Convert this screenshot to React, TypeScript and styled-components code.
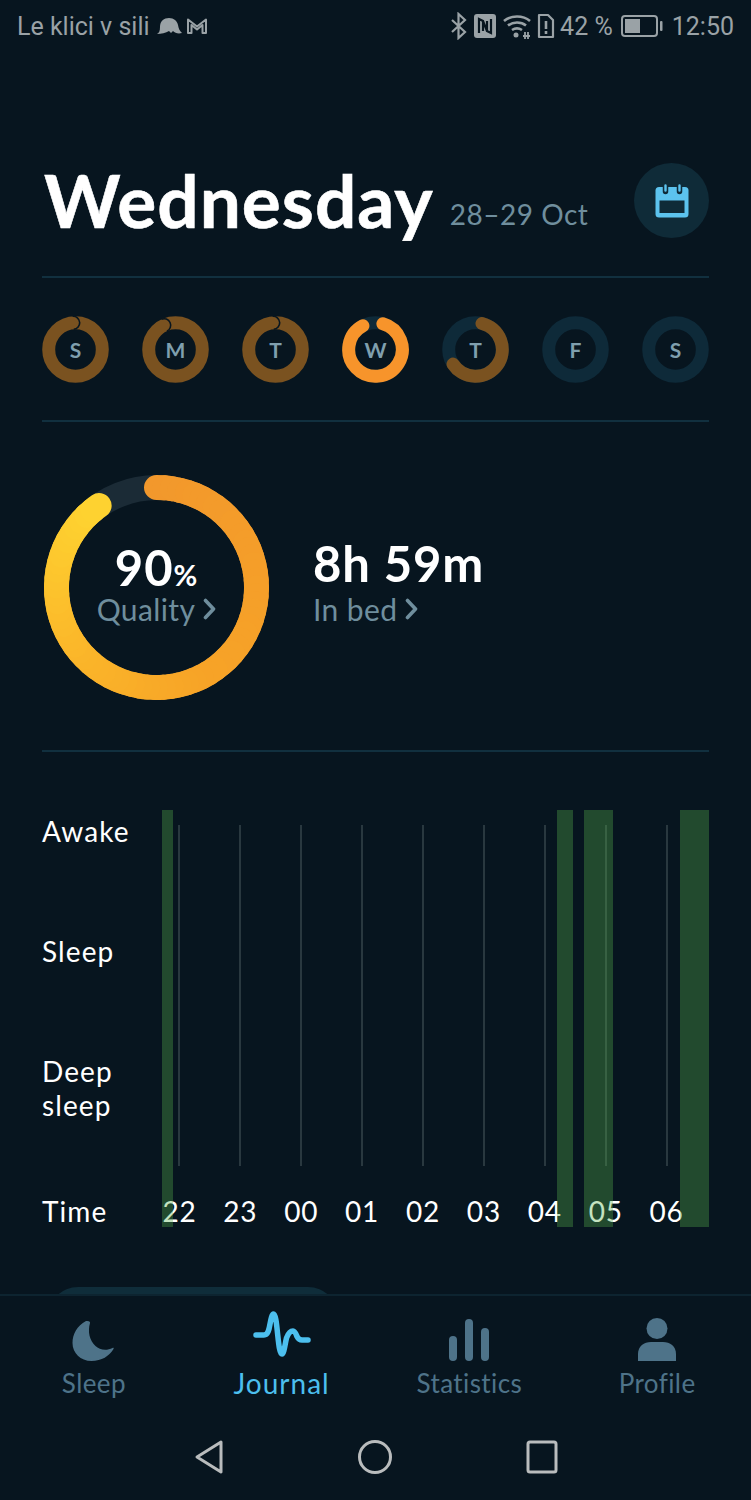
import React from "react";
import styled, { createGlobalStyle } from "styled-components";

const BG = "#07151f";
const MUTED = "#6f8e9d";
const NAV_MUTED = "#4e7389";
const ACCENT = "#4cbfee";
const APP_FONT = `Lato, "Open Sans", sans-serif`;

type Day = {
  letter: string;
  tone: "past" | "active" | "none";
  start?: number;
  end?: number;
  seam?: number; // where a finished ring's end cap overlaps its start
};

const DAYS: Day[] = [
  { letter: "S", tone: "past", seam: -5 },
  { letter: "M", tone: "past", seam: -25 },
  { letter: "T", tone: "past", seam: -5 },
  { letter: "W", tone: "active", start: 16, end: 332 },
  { letter: "T", tone: "past", start: 14, end: 237 },
  { letter: "F", tone: "none" },
  { letter: "S", tone: "none" },
];

const HOURS = ["22", "23", "00", "01", "02", "03", "04", "05", "06"];

// awake periods, x and width inside the plot
const AWAKE = [
  { left: 13, width: 11 },
  { left: 408, width: 15.5 },
  { left: 434.5, width: 29 },
  { left: 531, width: 29 },
];

const polar = (c: number, r: number, deg: number) => {
  const a = ((deg - 90) * Math.PI) / 180;
  return [c + r * Math.cos(a), c + r * Math.sin(a)];
};

const arc = (c: number, r: number, start: number, end: number) => {
  const [x1, y1] = polar(c, r, start);
  const [x2, y2] = polar(c, r, end);
  const large = end - start > 180 ? 1 : 0;
  return `M${x1} ${y1}A${r} ${r} 0 ${large} 1 ${x2} ${y2}`;
};

// dark hairline round the rounded end of a finished ring
const seamPath = (c: number, r: number, half: number, deg: number) => {
  const [x1, y1] = polar(c, r + half, deg);
  const [x2, y2] = polar(c, r - half, deg);
  return `M${x1} ${y1}A${half} ${half} 0 0 1 ${x2} ${y2}`;
};

// colour along the quality ring, from its start at the top round to the yellow end
const QUALITY_STOPS: [number, number[]][] = [
  [0, [242, 152, 44]],
  [0.5, [247, 164, 39]],
  [0.75, [251, 184, 42]],
  [1, [254, 210, 48]],
];

const qualityColour = (t: number) => {
  const i = QUALITY_STOPS.findIndex(([at]) => at >= t);
  if (i <= 0) return `rgb(${QUALITY_STOPS[0][1].join(",")})`;
  const [a, from] = QUALITY_STOPS[i - 1];
  const [b, to] = QUALITY_STOPS[i];
  const k = (t - a) / (b - a);
  return `rgb(${from.map((v, n) => Math.round(v + (to[n] - v) * k)).join(",")})`;
};

const QUALITY_SEGMENTS = Array.from({ length: 72 }, (_, i) => i);

const GlobalStyle = createGlobalStyle`
  html, body {
    margin: 0;
    background: ${BG};
  }
  * {
    box-sizing: border-box;
  }
`;

const Screen = styled.div`
  width: 751px;
  height: 1500px;
  display: flex;
  flex-direction: column;
  background: ${BG};
  font-family: ${APP_FONT};
  overflow: hidden;
`;

const StatusBar = styled.div`
  height: 52px;
  flex: none;
  display: flex;
  align-items: center;
  justify-content: space-between;
  padding: 0 17px;
  color: #9aa2a6;
  font-family: Roboto, sans-serif;
  font-size: 25px;
`;

const StatusGroup = styled.div`
  display: flex;
  align-items: center;
  gap: ${(p: { $gap?: number }) => p.$gap ?? 5}px;
`;

const Main = styled.main`
  height: 1244px;
  flex: none;
  overflow: hidden;
  padding: 112px 42px 0;
  border-bottom: 2px solid #0d2430;
`;

const Header = styled.header`
  height: 114px;
  display: flex;
  align-items: flex-start;
  border-bottom: 2px solid #11303f;
`;

const Title = styled.h1`
  margin: -1px 0 0 2px;
  color: #fff;
  font-size: 73px;
  line-height: 75px;
  font-weight: 700;
  letter-spacing: 1px;
  -webkit-text-stroke: 0.6px #fff;
`;

const DateRange = styled.span`
  margin: 33px 0 0 16px;
  color: ${MUTED};
  font-size: 28px;
  line-height: 34px;
  letter-spacing: 0.5px;
`;

const CalendarButton = styled.button`
  width: 75px;
  height: 75px;
  margin: -1px 0 0 auto;
  padding: 0;
  border: 0;
  border-radius: 50%;
  background: #0f2b38;
  display: flex;
  align-items: center;
  justify-content: center;
`;

const WeekRow = styled.div`
  height: 144px;
  display: flex;
  align-items: center;
  justify-content: space-between;
  border-bottom: 2px solid #11303f;
`;

const DayRing = styled.div`
  position: relative;
  width: 67px;
  height: 67px;
`;

const DayLetter = styled.span`
  position: absolute;
  inset: 0;
  display: flex;
  align-items: center;
  justify-content: center;
  color: #7f9fae;
  font-size: 21px;
  font-weight: 700;
`;

const Summary = styled.section`
  height: 330px;
  display: flex;
  align-items: flex-start;
  padding: 53px 0 0 2px;
  border-bottom: 2px solid #11303f;
`;

const QualityRing = styled.div`
  position: relative;
  width: 225px;
  height: 225px;
  flex: none;
`;

const QualityText = styled.div`
  position: absolute;
  inset: 0;
  display: flex;
  flex-direction: column;
  align-items: center;
  justify-content: center;
  padding-bottom: 7px;
`;

const BigValue = styled.div`
  color: #fff;
  font-size: 49px;
  line-height: 50px;
  font-weight: 700;
  letter-spacing: 0.9px;
`;

const Percent = styled.span`
  font-size: 29px;
`;

const LinkLabel = styled.div`
  display: flex;
  align-items: center;
  gap: 8px;
  color: ${MUTED};
  font-size: 30px;
  line-height: 36px;
  letter-spacing: 0.4px;
`;

const QualityLabel = styled(LinkLabel)`
  margin-top: -9px;
`;

const BedLabel = styled(LinkLabel)`
  margin-top: 3px;
`;

const InBed = styled.div`
  margin: 63px 0 0 44px;
`;

const Chart = styled.section`
  position: relative;
  height: 477px;
  display: flex;
  padding-top: 58px;
`;

const RowLabels = styled.div`
  width: 107px;
  flex: none;
  padding-top: 4px;
  display: grid;
  grid-template-rows: 120px 120px 140px auto;
`;

const RowLabel = styled.div`
  color: #fff;
  font-size: 28px;
  line-height: 34px;
  letter-spacing: 1.1px;
`;

const Hours = styled.div`
  display: flex;
`;

const Hour = styled.div`
  width: 60.9px;
  display: flex;
  flex-direction: column;
  align-items: center;
`;

const Tick = styled.div`
  width: 2px;
  height: 341px;
  margin-top: 15px;
  background: #29383f;
`;

const HourLabel = styled.div`
  margin-top: 28px;
  color: #fff;
  font-size: 28px;
  line-height: 34px;
  letter-spacing: 0.8px;
`;

const Plot = styled.div`
  position: absolute;
  left: 107px;
  top: 58px;
  width: 560px;
  height: 417px;
`;

const AwakeBar = styled.div`
  position: absolute;
  top: 0;
  bottom: 0;
  background: rgba(87, 175, 74, 0.35);
`;

const MorePill = styled.div`
  width: 290px;
  height: 60px;
  margin: 58px 0 0 6px;
  border-radius: 30px;
  background: #0f2d3a;
`;

const TabBar = styled.nav`
  height: 112px;
  flex: none;
  display: grid;
  grid-template-columns: repeat(4, 1fr);
`;

const Tab = styled.div<{ $active?: boolean }>`
  display: flex;
  flex-direction: column;
  align-items: center;
  justify-content: flex-start;
  padding-top: 18px;
  color: ${(p) => (p.$active ? ACCENT : NAV_MUTED)};
  font-size: ${(p) => (p.$active ? 28 : 26)}px;
  letter-spacing: ${(p) => (p.$active ? 1 : 0.4)}px;
`;

const TabIcon = styled.div`
  height: 52px;
  display: flex;
  align-items: center;
  justify-content: center;
`;

const TabLabel = styled.span`
  line-height: 34px;
`;

const SystemBar = styled.div`
  flex: 1;
  display: flex;
  align-items: center;
  justify-content: center;
  gap: 134px;
  padding-top: 6px;
`;

function DayProgress({ letter, tone, start, end, seam }: Day) {
  const colour = tone === "active" ? "#f7942b" : "#7a5220";
  return (
    <DayRing>
      <svg width="67" height="67" viewBox="0 0 67 67">
        <circle cx="33.5" cy="33.5" r="26.8" fill="none" stroke={seam === undefined ? "#0e2a39" : colour} strokeWidth="13" />
        {end !== undefined && start !== undefined && (
          <path d={arc(33.5, 26.8, start, end)} fill="none" stroke={colour} strokeWidth="13" strokeLinecap="round" />
        )}
        {seam !== undefined && <path d={seamPath(33.5, 26.8, 6.5, seam)} fill="none" stroke={BG} strokeWidth="1.6" />}
      </svg>
      <DayLetter>{letter}</DayLetter>
    </DayRing>
  );
}

function Chevron() {
  return (
    <svg width="13" height="22" viewBox="0 0 13 22">
      <path d="M2.5 2.5 10.5 11l-8 8.5" fill="none" stroke={MUTED} strokeWidth="3.6" strokeLinecap="round" strokeLinejoin="round" />
    </svg>
  );
}

function Status() {
  const c = "#9aa2a6";
  return (
    <StatusBar>
      <StatusGroup $gap={6}>
        <span>Le klici v sili</span>
        <svg width="26" height="20" viewBox="0 0 26 20">
          <path d="M1 18c2-1 3-3 3-7C4 5 8 2 13 2s8 3 9 7c.5 3 1.500 6 4 8-4 1-7 0-9-2l-2 2-2-2c-3 2-8 3-12 3z" fill={c} />
        </svg>
        <svg width="24" height="20" viewBox="0 0 24 20" style={{ marginLeft: -3 }}>
          <path d="M3 17V3.500l9 7 9-7V17h-3.500V9L12 13.500 6.500 9V17z" fill="none" stroke={c} strokeWidth="2" strokeLinejoin="round" />
        </svg>
      </StatusGroup>
      <StatusGroup>
        <svg width="18" height="28" viewBox="0 0 18 28">
          <path d="M2 8l13 12-6.500 6V2L15 8 2 20" fill="none" stroke={c} strokeWidth="2.200" />
        </svg>
        <svg width="24" height="28" viewBox="0 0 24 28">
          <rect x="1" y="2" width="22" height="24" rx="3" fill={c} />
          <path d="M6 21V7l4 2v10M18 7v14l-4-2V9M10 9l4 10" fill="none" stroke={BG} strokeWidth="2.200" />
        </svg>
        <svg width="30" height="28" viewBox="0 0 30 28">
          <path d="M2 9c7-6 19-6 26 0M6 13.500c5-4 13-4 18 0M10 18c3-2 7-2 10 0" fill="none" stroke={c} strokeWidth="2.600" />
          <circle cx="14" cy="23" r="2.500" fill={c} />
          <path d="M21 24h7M23 20v7M26 20v7" stroke={c} strokeWidth="1.800" />
        </svg>
        <svg width="18" height="28" viewBox="0 0 18 28">
          <path d="M2 3h9l5 5v17H2z" fill="none" stroke={c} strokeWidth="2.200" strokeLinejoin="round" />
          <path d="M9 9v8M9 19v3" stroke={c} strokeWidth="2.600" />
        </svg>
        <span>42 %</span>
        <svg width="42" height="24" viewBox="0 0 42 24" style={{ marginLeft: 3 }}>
          <rect x="1" y="2" width="35" height="20" rx="3" fill="none" stroke={c} strokeWidth="2" />
          <rect x="4" y="5" width="15" height="14" fill={c} />
          <rect x="39" y="7" width="2.500" height="10" rx="1" fill={c} />
        </svg>
        <span style={{ marginLeft: 4 }}>12:50</span>
      </StatusGroup>
    </StatusBar>
  );
}

export default function App() {
  return (
    <Screen>
      <GlobalStyle />
      <Status />
      <Main>
        <Header>
          <Title>Wednesday</Title>
          <DateRange>28–29 Oct</DateRange>
          <CalendarButton aria-label="Calendar">
            <svg width="34" height="34" viewBox="0 0 34 34">
              <rect x="0.500" y="3" width="33" height="30.500" rx="3.500" fill="#5cc3ee" />
              <rect x="4.500" y="16.500" width="25" height="12.500" fill="#0f2b38" />
              <path d="M10.500 1.500v6M24.500 1.500v6" stroke="#0f2b38" strokeWidth="5.500" strokeLinecap="round" />
              <path d="M10.500 1.500v5M24.500 1.500v5" stroke="#5cc3ee" strokeWidth="2.400" strokeLinecap="round" />
            </svg>
          </CalendarButton>
        </Header>

        <WeekRow>
          {DAYS.map((day, idx) => (
            <DayProgress key={idx} {...day} />
          ))}
        </WeekRow>

        <Summary>
          <QualityRing>
            <svg width="225" height="225" viewBox="0 0 225 225">
              <circle cx="112.500" cy="112.500" r="100" fill="none" stroke="#1b2b36" strokeWidth="25" />
              {QUALITY_SEGMENTS.map((i) => {
                const step = 325 / QUALITY_SEGMENTS.length;
                return (
                  <path
                    key={i}
                    d={arc(112.5, 100, i * step, (i + 1) * step)}
                    fill="none"
                    stroke={qualityColour(i / (QUALITY_SEGMENTS.length - 1))}
                    strokeWidth="25"
                    strokeLinecap="round"
                  />
                );
              })}
            </svg>
            <QualityText>
              <BigValue>
                90<Percent>%</Percent>
              </BigValue>
              <QualityLabel>
                Quality <Chevron />
              </QualityLabel>
            </QualityText>
          </QualityRing>
          <InBed>
            <BigValue>8h 59m</BigValue>
            <BedLabel>
              In bed <Chevron />
            </BedLabel>
          </InBed>
        </Summary>

        <Chart>
          <RowLabels>
            <RowLabel>Awake</RowLabel>
            <RowLabel>Sleep</RowLabel>
            <RowLabel>
              Deep
              <br />
              sleep
            </RowLabel>
            <RowLabel>Time</RowLabel>
          </RowLabels>
          <Hours>
            {HOURS.map((hour) => (
              <Hour key={hour}>
                <Tick />
                <HourLabel>{hour}</HourLabel>
              </Hour>
            ))}
          </Hours>
          <Plot>
            {AWAKE.map((bar) => (
              <AwakeBar key={bar.left} style={{ left: bar.left, width: bar.width }} />
            ))}
          </Plot>
        </Chart>

        <MorePill />
      </Main>

      <TabBar>
        <Tab>
          <TabIcon>
            <svg width="44" height="46" viewBox="0 0 44 46">
              <path d="M14 4C5 9 .5 17 .5 26c0 10 8 18 19 18 10 0 18-5 22-12 .5-1 0-1.500-1-1-6 3-13 2-17-2-6-6-8-14-5.500-23 .3-1-.5-2.500-4-2z" fill={NAV_MUTED} />
            </svg>
          </TabIcon>
          <TabLabel>Sleep</TabLabel>
        </Tab>
        <Tab $active>
          <TabIcon>
            <svg width="60" height="50" viewBox="0 0 60 50" style={{ marginTop: -8 }}>
              <path d="M4 24h8c4 0 5-5 6-11 1-5 2-10 3.500-10 2 0 3 9 4 19 1 9 2 21 4.500 21 2 0 3-10 4.500-16 1.500-4 3-7 6.500-7 2 0 3 3 4 5.500 1 2 2 3.500 5 3.500h6" fill="none" stroke={ACCENT} strokeWidth="5.500" strokeLinecap="round" strokeLinejoin="round" />
            </svg>
          </TabIcon>
          <TabLabel>Journal</TabLabel>
        </Tab>
        <Tab>
          <TabIcon>
            <svg width="42" height="46" viewBox="0 0 42 46">
              <rect x="1" y="19" width="8" height="25" rx="4" fill={NAV_MUTED} />
              <rect x="17" y="2" width="8" height="42" rx="4" fill={NAV_MUTED} />
              <rect x="33" y="11" width="8" height="33" rx="4" fill={NAV_MUTED} />
            </svg>
          </TabIcon>
          <TabLabel>Statistics</TabLabel>
        </Tab>
        <Tab>
          <TabIcon>
            <svg width="40" height="46" viewBox="0 0 40 46">
              <ellipse cx="20" cy="11.500" rx="10.500" ry="10.500" fill={NAV_MUTED} />
              <path d="M1 44V37c0-8 6-12 13-12h12c7 0 13 4 13 12v7z" fill={NAV_MUTED} />
            </svg>
          </TabIcon>
          <TabLabel>Profile</TabLabel>
        </Tab>
      </TabBar>

      <SystemBar>
        <svg width="30" height="36" viewBox="0 0 30 36">
          <path d="M27 3 3 18l24 15z" fill="none" stroke="#b9bcbd" strokeWidth="3" strokeLinejoin="round" />
        </svg>
        <svg width="34" height="36" viewBox="0 0 34 36">
          <circle cx="17" cy="18" r="15.500" fill="none" stroke="#b9bcbd" strokeWidth="3" />
        </svg>
        <svg width="32" height="34" viewBox="0 0 32 34">
          <rect x="2" y="2" width="28" height="30" rx="2" fill="none" stroke="#b9bcbd" strokeWidth="3" />
        </svg>
      </SystemBar>
    </Screen>
  );
}
